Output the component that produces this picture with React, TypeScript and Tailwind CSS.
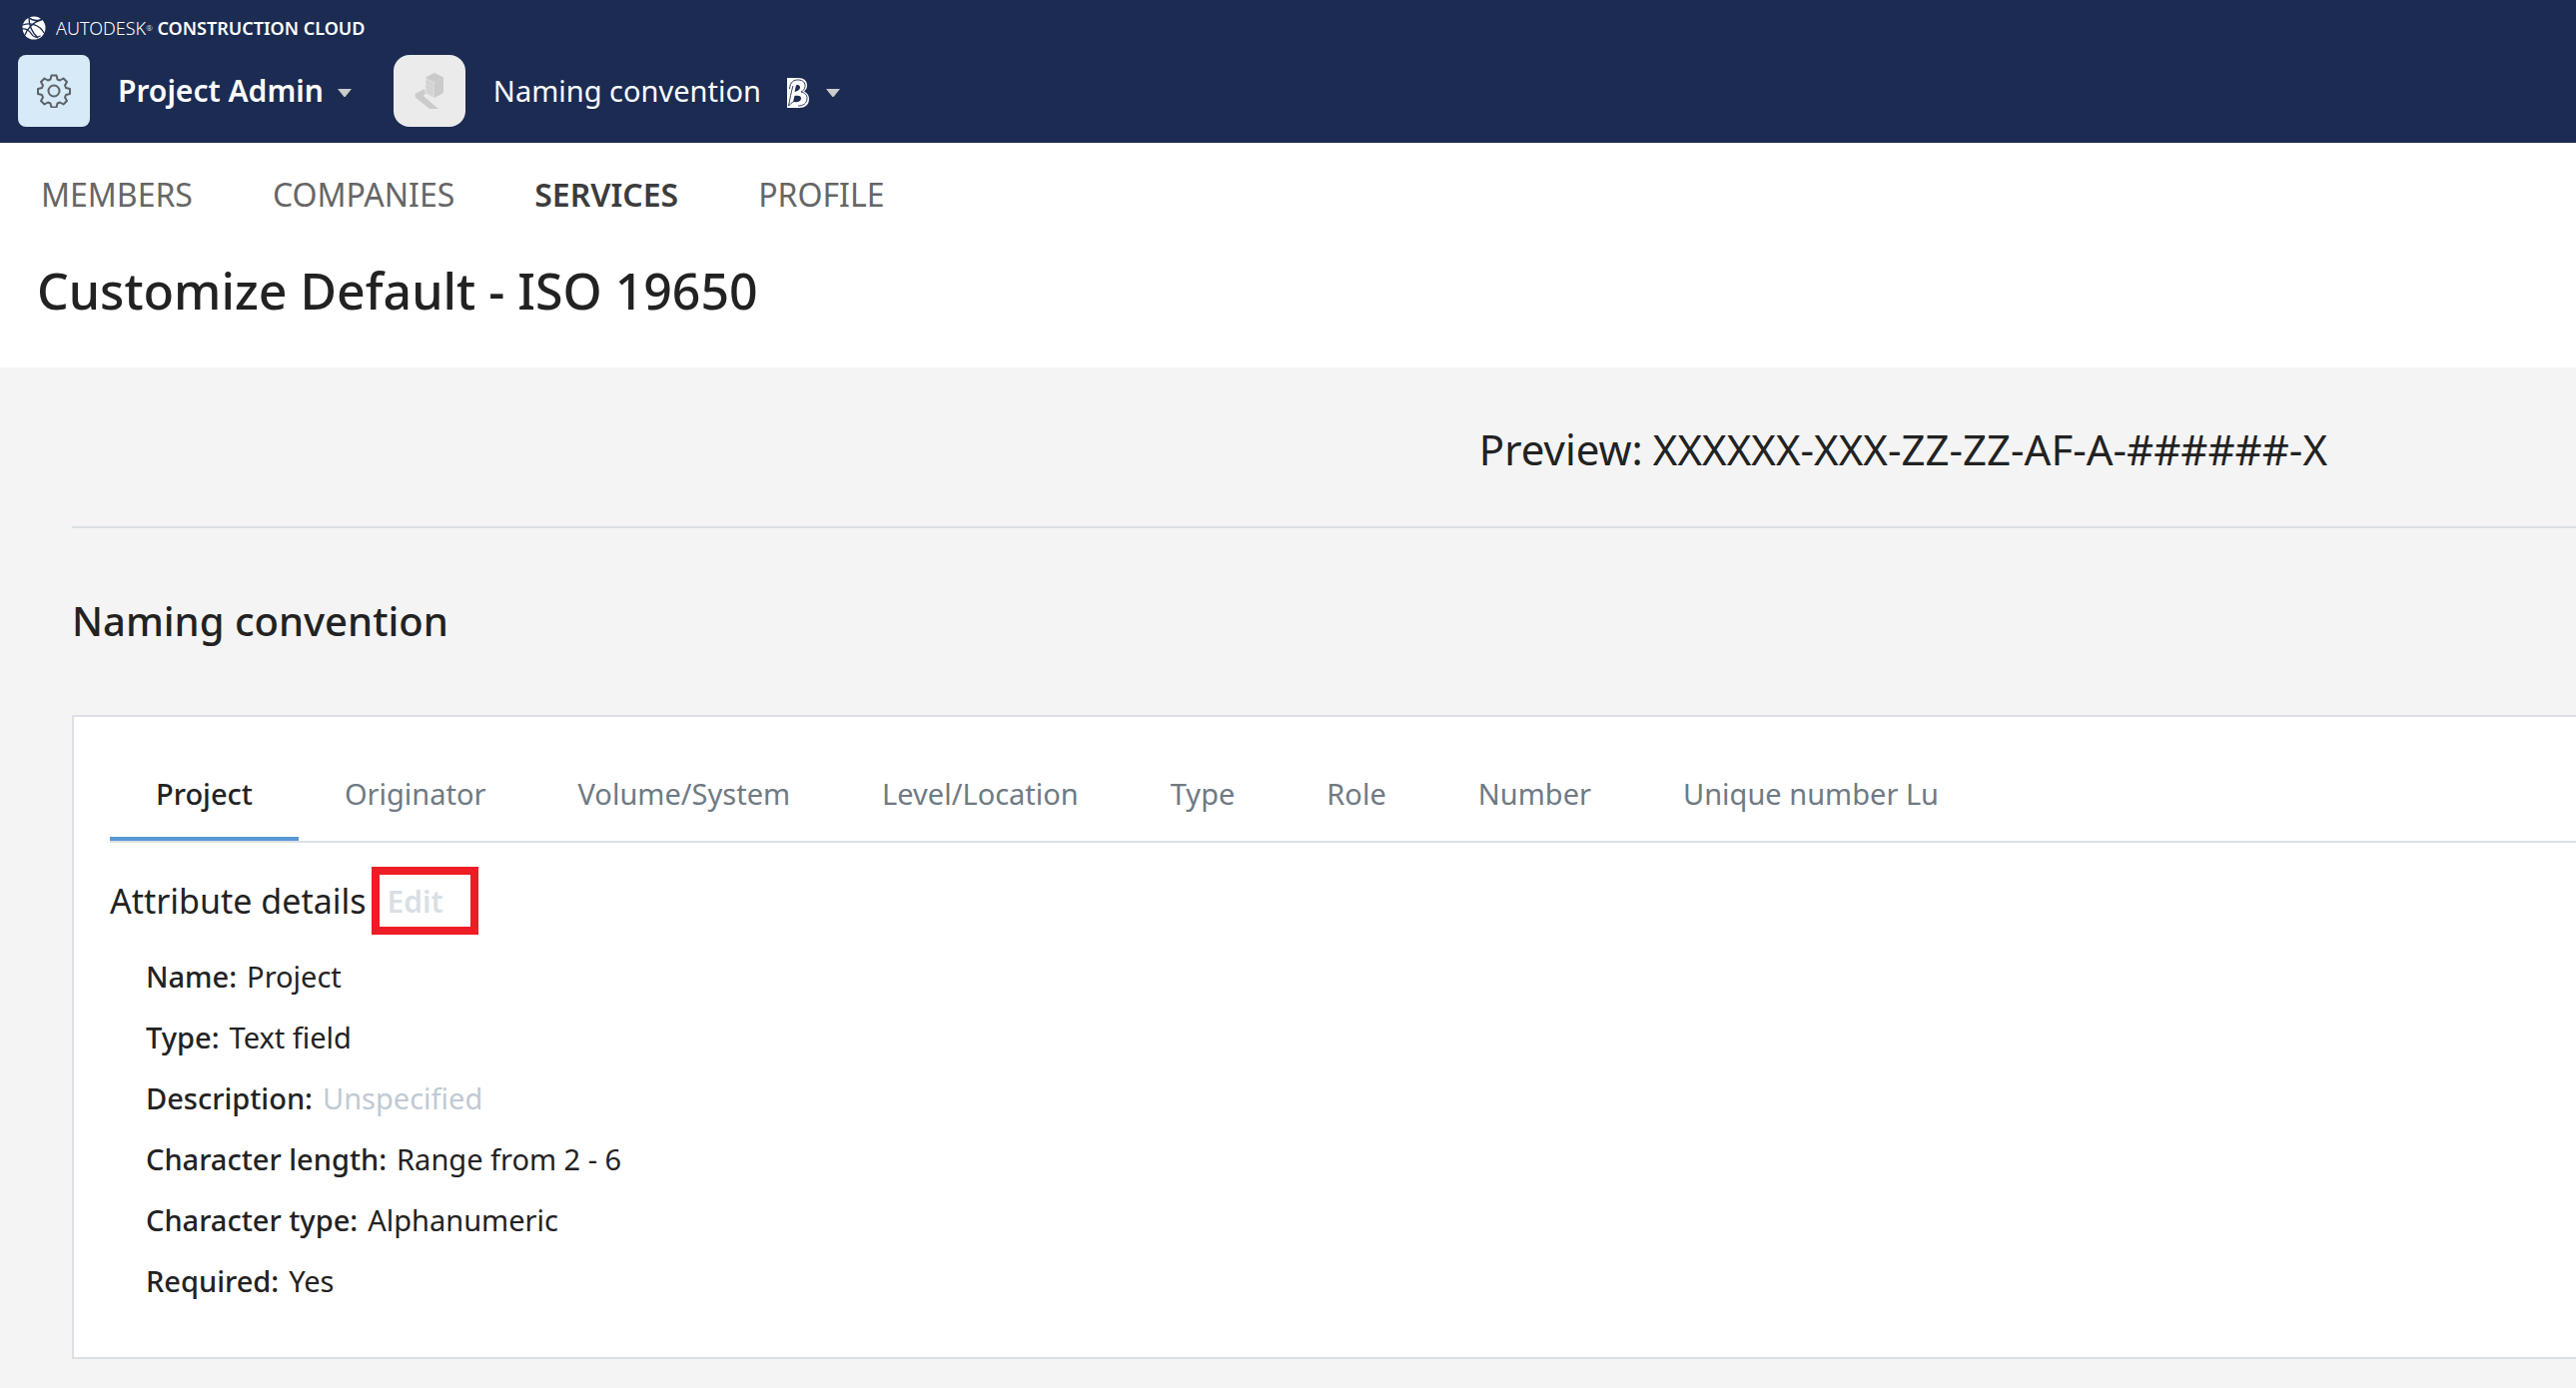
import clsx from 'clsx';

interface NavItem {
  label: string;
  active?: boolean;
}

interface Attribute {
  label: string;
  value: string;
  muted?: boolean;
}

const navItems: NavItem[] = [
  { label: 'MEMBERS' },
  { label: 'COMPANIES' },
  { label: 'SERVICES', active: true },
  { label: 'PROFILE' }
];

const tabs = ['Project', 'Originator', 'Volume/System', 'Level/Location', 'Type', 'Role', 'Number', 'Unique number Lu'];

const attributes: Attribute[] = [
  { label: 'Name:', value: 'Project' },
  { label: 'Type:', value: 'Text field' },
  { label: 'Description:', value: 'Unspecified', muted: true },
  { label: 'Character length:', value: 'Range from 2 - 6' },
  { label: 'Character type:', value: 'Alphanumeric' },
  { label: 'Required:', value: 'Yes' }
];

function Caret() {
  return (
    <svg className="mt-1" width="14" height="8" viewBox="0 0 14 8" aria-hidden="true">
      <path d="M0 0h14L8 7.4a1.4 1.4 0 0 1-2 0Z" fill="#cccccc" />
    </svg>
  );
}

function GlobeIcon() {
  return (
    <svg width="24" height="24" viewBox="0 0 24 24" aria-hidden="true">
      <circle cx="12" cy="12" r="11.5" fill="#fff" />
      <g fill="none" stroke="#1b2b52" strokeWidth="1.3">
        <path d="M1 9C8 6 18 9 22 17" />
        <path d="M3 19C5 13 11 6 20 3.5" />
        <path d="M7 1.5c0 7 3 15 9 20.5" />
        <path d="M7 1.5c3 3 7 4 13 2" />
        <path d="M0 13c4-1 8 2 9.5 5s5 4 9 2" />
      </g>
    </svg>
  );
}

function GearIcon() {
  return (
    <svg width="34" height="34" viewBox="0 0 34 34" fill="none" stroke="#5c6266" strokeWidth="2" aria-hidden="true">
      <path
        strokeLinejoin="round"
        d="M14.500 1.500h5l1 4 2.500 1 3.500-2 3.500 3.500-2 3.500 1 2.500 4 1v5l-4 1-1 2.500 2 3.500-3.500 3.500-3.500-2-2.500 1-1 4h-5l-1-4-2.500-1-3.500 2L4 27l2-3.500-1-2.500-4-1v-5l4-1 1-2.500L4 8l3.500-3.500 3.500 2 2.500-1Z"
      />
      <circle cx="17" cy="17" r="5.5" />
    </svg>
  );
}

function BuildingIcon() {
  return (
    <svg width="30" height="36" viewBox="0 0 30 36" aria-hidden="true">
      <path d="M10 16L2 20c-2 1-2 4 0 5.500L15 36h9L10 24c-1-1-1-2 1-3Z" fill="#cbcbcb" />
      <path d="M11 4.500l9 4.500v16l-9-4.500Z" fill="#dadada" />
      <path d="M29 4.500L20 9v16l9-5Z" fill="#cbcbcb" />
      <path d="M20 0l9 4.500L20 9l-9-4.500Z" fill="#c9c9c9" />
      <path d="M11 9l9 4.500M11 13l9 4.500M11 17l9 4.500M14 6v16M17 7.500v16" stroke="#cbcbcb" strokeWidth="0.7" />
    </svg>
  );
}

function BuildIcon() {
  return (
    <svg className="mt-1" width="22" height="30" viewBox="0 0 22 30" aria-hidden="true">
      <path d="M0 0h11c6 0 9 3 9 7.500 0 3-1 4.500-3 6 3 1.500 5 4 5 7.500 0 6-4 9-10 9H0Z" fill="#fff" />
      <path d="M9 7.500c2-1 4 0 4 2s-2 4-5.500 4.500ZM7.500 18c4-1 7 0 6.500 3s-4 3.500-8 3Z" fill="#1b2b52" />
      <path
        d="M2.500 11C3 4 7 1.800 11 2c5 0 7.500 3 7 6.500-.3 3-2 4.500-4 5.500 4 1 6 3 6 6.500 0 5-4 7.500-9 7.500M1.500 28C3 21 4 14 6 8M1.500 28c2-2 3-3.500 5-4"
        fill="none"
        stroke="#1b2b52"
        strokeWidth="0.9"
      />
    </svg>
  );
}

export default function App() {
  return (
    <div className="min-h-screen overflow-x-hidden bg-[#f4f4f4] font-['Noto_Sans',sans-serif] text-[#222222]">
      <header className="bg-[#1b2b52] px-[18px] pt-4 pb-4 text-white">
        <div className="flex h-6 items-center gap-[10px] pl-1 text-[18px]">
          <GlobeIcon />
          <p className="whitespace-nowrap">
            <span className="font-light">AUTODESK<sup className="text-[8px]">®</sup> </span>
            <span className="font-semibold">CONSTRUCTION CLOUD</span>
          </p>
        </div>
        <div className="mt-[15px] flex items-center">
          <div className="flex size-[72px] items-center justify-center rounded-lg bg-[#d6eaf8]">
            <GearIcon />
          </div>
          <button className="ml-7 flex items-center gap-[14px] text-[30px] leading-10 font-semibold">
            Project Admin
            <Caret />
          </button>
          <div className="ml-[42px] flex size-[72px] items-center justify-center rounded-2xl bg-[#ebebeb]">
            <BuildingIcon />
          </div>
          <button className="ml-7 flex items-center text-[29px] leading-10">
            Naming convention
            <span className="ml-[26px] flex items-center gap-[17px]">
              <BuildIcon />
              <Caret />
            </span>
          </button>
        </div>
      </header>

      <div className="bg-white px-[37px] pt-8 pb-[45px]">
        <nav className="flex gap-20 px-1 text-[32px] leading-10 text-[#666666]">
          {navItems.map((item) => (
            <a key={item.label} href="#" className={clsx(item.active && 'font-semibold text-[#3c3c3c]')}>
              {item.label}
            </a>
          ))}
        </nav>
        <h1 className="mt-11 text-[50px] leading-[64px] font-medium">Customize Default - ISO 19650</h1>
      </div>

      <main className="pl-[72px]">
        <div className="flex h-[161px] items-center justify-end border-b-2 border-[#dce0e4] pt-1 pr-[249px] text-[42px]">
          <span>Preview:</span>
          <span className="ml-[10px]">XXXXXX-XXX-ZZ-ZZ-AF-A-######-X</span>
        </div>
        <h2 className="mt-[66px] text-[40px] leading-[54px] font-medium">Naming convention</h2>

        <section className="mt-[67px] border-2 border-r-0 border-[#dce0e4] bg-white pt-[50px] pb-[46px] pl-9">
          <div role="tablist" className="flex border-b-2 border-[#dce0e4] text-[29px] leading-10">
            {tabs.map((tab, i) => (
              <button
                key={tab}
                role="tab"
                aria-selected={i === 0}
                className={clsx(
                  'h-[74px] border-b-4 px-[46px] pb-4',
                  i === 0 ? 'border-[#5b97d5] font-medium' : 'border-transparent text-[#6f7a83]'
                )}
              >
                {tab}
              </button>
            ))}
          </div>
          <div className="mt-6 flex items-center">
            <h3 className="text-[34px]">Attribute details</h3>
            <button className="ml-[5px] h-[68px] w-[107px] border-8 border-[#ee1c24] pl-2 text-left text-[30px] leading-[54px] font-semibold text-[#d9dfe4]">
              Edit
            </button>
          </div>
          <dl className="mt-[11px] pl-9 text-[29px] leading-[61px]">
            {attributes.map((attr) => (
              <div key={attr.label} className="flex gap-[10px]">
                <dt className="font-medium">{attr.label}</dt>
                <dd className={clsx(attr.muted && 'text-[#c0cad4]')}>{attr.value}</dd>
              </div>
            ))}
          </dl>
        </section>
      </main>
    </div>
  );
}
